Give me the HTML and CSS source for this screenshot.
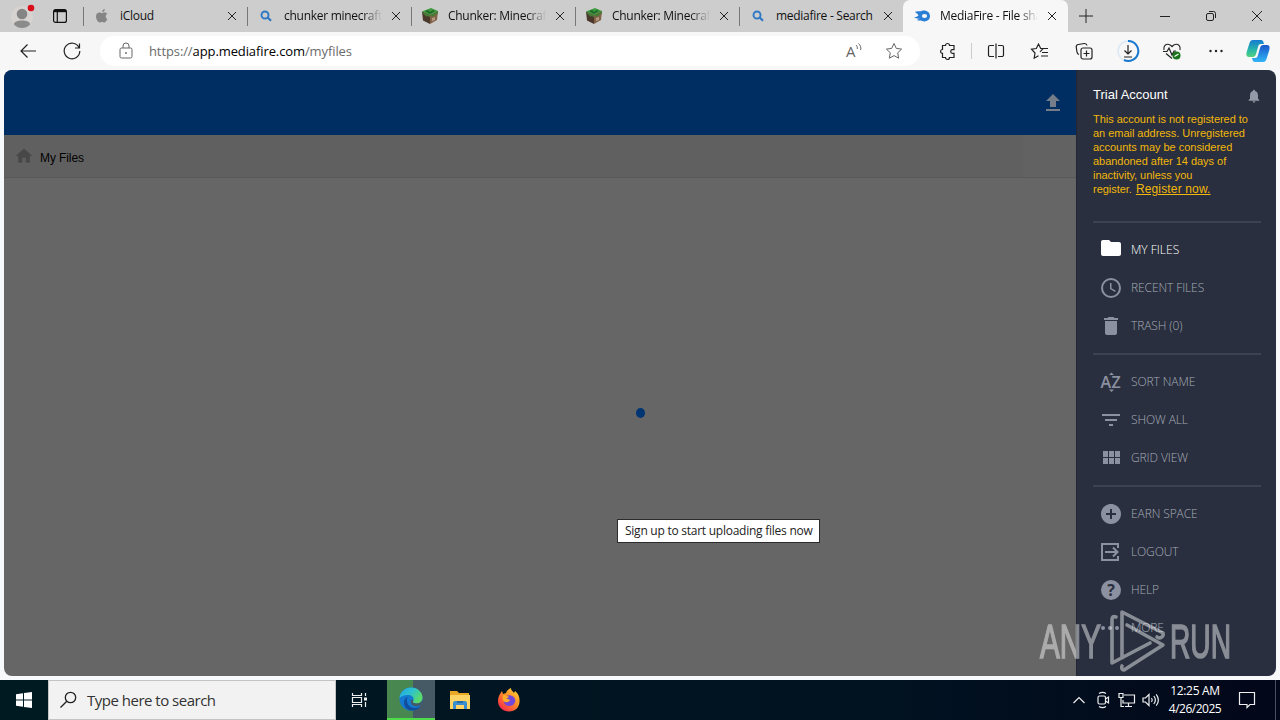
FILE: index.html
```html
<!DOCTYPE html>
<html lang="en">
<head>
  <meta charset="UTF-8" />
  <title>MediaFire - File sharing</title>
  <link rel="stylesheet" href="styles.css">
</head>
<body>
  <div class="screen">
    <!-- Tabs -->
    <div class="tab-bar">
      <div class="tab-tools">
        <svg class="profile" width="24" height="26" viewBox="0 0 24 26">
          <circle cx="11" cy="14" r="11" fill="#d6d3d1"/>
          <circle cx="11" cy="11" r="5.300" fill="#858585"/>
          <path d="M3 21.500c0-3 3.500-4 8-4s8 1 8 4c-2 2.500-5 3.500-8 3.500s-6-1-8-3.500z" fill="#8b8b8b"/>
          <circle cx="20" cy="5" r="3.300" fill="#d90c18"/>
        </svg>
        <svg width="16" height="16" viewBox="0 0 16 16" fill="none" stroke="#111" stroke-width="1.200">
          <rect x="1.600" y="1.600" width="12.800" height="12.800" rx="2"/>
          <path d="M2 3h12" stroke-width="2.400"/><path d="M5.300 4v10"/>
        </svg>
      </div>
      <div class="tab">
        <svg class="favicon" viewBox="0 0 16 16"><path d="M10.800 1c.1 1.700-1.200 3-2.700 3C8 2.500 9.200 1.200 10.800 1zM13 11.500c-.8 1.900-1.700 3-2.800 3-.8 0-1.200-.5-2.200-.5s-1.400.5-2.200.5C3.800 14.500 2 11.200 2 8.600 2 6 3.600 4.600 5.300 4.600c1 0 1.800.6 2.600.6.700 0 1.600-.7 2.900-.7 1 0 1.900.5 2.500 1.300-2.300 1.400-1.900 4.500.3 5.300z" fill="#858585"/></svg>
        <span class="tab-title">iCloud</span>
        <svg class="close" viewBox="0 0 10 10"><path d="M1 1l8 8M9 1l-8 8"/></svg>
      </div>
      <div class="tab">
        <svg class="favicon" viewBox="0 0 16 16" fill="none" stroke="#2f78c4"><circle cx="7" cy="7" r="3.500" stroke-width="1.900"/><path d="M9.700 9.400l3.300 3.400" stroke-width="2.200"/></svg>
        <span class="tab-title fade">chunker minecraft</span>
        <svg class="close" viewBox="0 0 10 10"><path d="M1 1l8 8M9 1l-8 8"/></svg>
      </div>
      <div class="tab">
        <svg class="favicon" viewBox="0 0 16 16"><path d="M0 3.500L9 0l7 3-8 4z" fill="#3d9b3d"/><path d="M0 3.500L8 7v9l-7-3.500z" fill="#49382b"/><path d="M8 7l8-4-1 9-7 4z" fill="#806247"/><path d="M3 3l3-1 2 2 3-2 2 1-5 3z" fill="#20682a"/><path d="M0 4l8 3v2L5 8v1L2 6.500zM8 7l8-4v2.500l-3 1V8l-3 .5z" fill="#467a35"/><path d="M10 10l3-1v3l-3 1z" fill="#b49a82"/></svg>
        <span class="tab-title fade">Chunker: Minecraft</span>
        <svg class="close" viewBox="0 0 10 10"><path d="M1 1l8 8M9 1l-8 8"/></svg>
      </div>
      <div class="tab">
        <svg class="favicon" viewBox="0 0 16 16"><path d="M0 3.500L9 0l7 3-8 4z" fill="#3d9b3d"/><path d="M0 3.500L8 7v9l-7-3.500z" fill="#49382b"/><path d="M8 7l8-4-1 9-7 4z" fill="#806247"/><path d="M3 3l3-1 2 2 3-2 2 1-5 3z" fill="#20682a"/><path d="M0 4l8 3v2L5 8v1L2 6.500zM8 7l8-4v2.500l-3 1V8l-3 .5z" fill="#467a35"/><path d="M10 10l3-1v3l-3 1z" fill="#b49a82"/></svg>
        <span class="tab-title fade">Chunker: Minecraft</span>
        <svg class="close" viewBox="0 0 10 10"><path d="M1 1l8 8M9 1l-8 8"/></svg>
      </div>
      <div class="tab">
        <svg class="favicon" viewBox="0 0 16 16" fill="none" stroke="#2f78c4"><circle cx="7" cy="7" r="3.500" stroke-width="1.900"/><path d="M9.700 9.400l3.300 3.400" stroke-width="2.200"/></svg>
        <span class="tab-title">mediafire - Search</span>
        <svg class="close" viewBox="0 0 10 10"><path d="M1 1l8 8M9 1l-8 8"/></svg>
      </div>
      <div class="tab active">
        <svg class="favicon" viewBox="0 0 16 16"><path d="M1 4c3-1.500 5 0 7-1.300C12 1.500 16 4 16 8s-4 6.500-8 5c-2-1-3 .2-5-1 1-1 2-.7 3-1.300C4 10.500 2 11 0 9c2 .2 4-.5 4.500-1.500C3.500 5.500 2.500 5 1 4z" fill="#2b7ed6"/><ellipse cx="10.500" cy="8" rx="2.600" ry="2" fill="#f7f7f7"/></svg>
        <span class="tab-title fade">MediaFire - File sharing</span>
        <svg class="close" viewBox="0 0 10 10"><path d="M1 1l8 8M9 1l-8 8"/></svg>
      </div>
      <svg class="new-tab" width="14" height="14" viewBox="0 0 14 14"><path d="M7 0v14M0 7h14"/></svg>
      <div class="window-controls">
        <svg viewBox="0 0 12 12"><path d="M1 6.500h10"/></svg>
        <svg viewBox="0 0 12 12"><rect x="1.500" y="3.500" width="7" height="7" rx="1.500"/><path d="M4 1.500h4.500a2 2 0 0 1 2 2V8"/></svg>
        <svg viewBox="0 0 12 12"><path d="M1 1l10 10M11 1L1 11"/></svg>
      </div>
    </div>

    <!-- Toolbar -->
    <div class="toolbar">
      <span class="tool"><svg viewBox="0 0 20 20"><path d="M18 10H3M9.500 3.500L3 10l6.500 6.500"/></svg></span>
      <span class="tool"><svg viewBox="0 0 20 20"><path d="M17 6.500A7.800 7.800 0 1 0 17.800 10M17.500 2.500v4.500H13"/></svg></span>
      <div class="address">
        <svg class="lock" viewBox="0 0 20 20"><rect x="4" y="7" width="12" height="10" rx="1.500"/><path d="M7 7V5a3 3 0 0 1 6 0v2"/><circle cx="10" cy="12" r=".6"/></svg>
        <span class="url">https://<b>app.mediafire.com</b>/myfiles</span>
        <svg class="addr-icon" viewBox="0 0 20 20"><text x="2" y="15.500" font-size="15" stroke="none" fill="#666">A</text><path d="M12 4c1.200 1 1.500 2.300 1.300 4M14.500 2.500c2 1.600 2.700 4 2.200 6.500"/></svg>
        <svg class="addr-icon" viewBox="0 0 20 20"><path d="M10 2.500l2.300 4.900 5.300.7-3.900 3.700 1 5.400-4.700-2.600-4.700 2.600 1-5.400-3.900-3.700 5.300-.7z"/></svg>
      </div>
      <span class="tool"><svg viewBox="0 0 20 20"><path d="M7.500 4.500a2 2 0 0 1 4 0H16v4.200h-1.500a1.800 1.800 0 0 0 0 3.600H16v4.200h-4.500a2 2 0 0 1-4 0H4.500v-4.200a1.900 1.900 0 0 1 0-3.800v-4z"/></svg></span>
      <i class="tool-sep"></i>
      <span class="tool"><svg viewBox="0 0 20 20"><path d="M8 4.500H4a1.500 1.500 0 0 0-1.500 1.500v8A1.500 1.500 0 0 0 4 15.500h4M12 4.500h4a1.500 1.500 0 0 1 1.500 1.500v8a1.500 1.500 0 0 1-1.500 1.500h-4M10 2.500v15"/></svg></span>
      <span class="tool"><svg viewBox="0 0 20 20"><path d="M8.500 14.700l-4.300 2.500L5 12 1.500 8.200l4.800-.7L8.500 3l2.200 4.500H18M12 11.500h6M11 15h7M10.700 7.500l2.300.3-3 3"/></svg></span>
      <span class="tool"><svg viewBox="0 0 20 20"><rect x="7" y="7" width="11" height="11" rx="2"/><path d="M12.500 9.500v6M9.500 12.500h6M5 13.500A3 3 0 0 1 3 11l-.8-5A2.500 2.500 0 0 1 4.300 3.500l6-1A2.500 2.500 0 0 1 13 4.500"/></svg></span>
      <span class="tool"><svg class="big" viewBox="0 0 24 24"><circle cx="12" cy="12" r="10" stroke="#dbe8f5" stroke-width="1.500"/><path d="M12 2a10 10 0 1 1-4 19" stroke="#1877cf" stroke-width="2"/><path d="M12 6v9M8.500 11.500L12 15l3.500-3.500M8 18h8"/></svg></span>
      <span class="tool"><svg viewBox="0 0 20 20"><path d="M2 9C1 5 4 2.500 7 3.500c1.500.4 2.300 1.200 3 2 .7-.8 1.500-1.600 3-2 3-1 6 1.500 5 5.500M1 10.500h4l2-3.500 3 7 2-4h2M4 12.500l6 5"/><circle cx="14.500" cy="14.500" r="4" fill="#19731d" stroke="none"/><path d="M12.500 15.500l4-2.500" stroke="#fff"/></svg></span>
      <span class="tool"><svg viewBox="0 0 20 20" class="dots"><circle cx="4.500" cy="10" r="1.200"/><circle cx="10" cy="10" r="1.200"/><circle cx="15.500" cy="10" r="1.200"/></svg></span>
      <span class="tool copilot"><svg class="big" viewBox="0 0 24 24">
        <defs>
          <linearGradient id="cpA" x1="0" y1="0" x2="0" y2="1"><stop offset="0" stop-color="#147bd1"/><stop offset=".6" stop-color="#28b8a8"/><stop offset="1" stop-color="#53d27c"/></linearGradient>
          <linearGradient id="cpB" x1="0" y1="0" x2="0" y2="1"><stop offset="0" stop-color="#1957c8"/><stop offset="1" stop-color="#31b6f6"/></linearGradient>
        </defs>
        <path d="M7 1h8c2 0 2.500 2 3 4h-3c-2 0-2.500 1-3 3l-2 7c-.5 2-1.500 3-3.500 3H3c-3 0-3-3-2-6l2.500-8C4.200 2 5 1 7 1z" fill="url(#cpA)" stroke="none"/>
        <path d="M17 23H9c-2 0-2.500-2-3-4h3c2 0 2.500-1 3-3l2-7c.5-2 1.500-3 3.500-3H21c3 0 3 3 2 6l-2.500 8c-.7 2-1.500 3-3.500 3z" fill="url(#cpB)" stroke="none"/>
      </svg></span>
    </div>

    <!-- Page -->
    <div class="page">
      <div class="files">
        <div class="files-header">
          <svg width="24" height="24" viewBox="0 0 24 24"><path d="M9 16h6v-6h4l-7-7-7 7h4zm-4 2h14v2H5z" fill="#747d88"/></svg>
        </div>
        <div class="crumbs">
          <svg width="20" height="20" viewBox="0 0 24 24"><path d="M10 20v-6h4v6h5v-8h3L12 3 2 12h3v8z" fill="#484848"/></svg>
          <span>My Files</span>
          <i class="crumb-action"></i>
        </div>
        <div class="files-body"><i class="loader"></i></div>
      </div>

      <div class="sidebar">
        <div class="account">
          <div class="account-row">
            <span class="account-name">Trial Account</span>
            <svg width="16" height="16" viewBox="0 0 24 24"><path d="M12 22c1.100 0 2-.9 2-2h-4c0 1.100.9 2 2 2zm6-6v-5c0-3.070-1.640-5.640-4.500-6.320V4c0-.83-.67-1.500-1.500-1.500s-1.500.67-1.500 1.500v.68C7.630 5.360 6 7.920 6 11v5l-2 2v1h16v-1l-2-2z" fill="#959aa8"/></svg>
          </div>
          <p class="notice">This account is not registered to<br>an email address. Unregistered<br>accounts may be considered<br>abandoned after 14 days of<br>inactivity, unless you<br>register. <a>Register now.</a></p>
        </div>
        <div class="menu">
          <div class="menu-item selected">
            <svg viewBox="0 0 24 24"><path d="M10 4H4c-1.100 0-2 .9-2 2v12c0 1.100.9 2 2 2h16c1.100 0 2-.9 2-2V8c0-1.100-.9-2-2-2h-8l-2-2z"/></svg>
            <span>MY FILES</span>
          </div>
          <div class="menu-item">
            <svg viewBox="0 0 24 24"><circle cx="12" cy="12" r="9" fill="none" stroke="#8c91a1" stroke-width="2"/><path d="M12.500 7H11v6l5 3 .8-1.300-4.300-2.500z"/></svg>
            <span>RECENT FILES</span>
          </div>
          <div class="menu-item">
            <svg viewBox="0 0 24 24"><path d="M6 19c0 1.100.9 2 2 2h8c1.100 0 2-.9 2-2V7H6v12zM19 4h-3.500l-1-1h-5l-1 1H5v2h14V4z"/></svg>
            <span>TRASH (0)</span>
          </div>
        </div>
        <div class="menu">
          <div class="menu-item">
            <svg viewBox="0 0 24 24" class="az"><text x="1.500" y="18">A</text><text x="12.500" y="18">Z</text><path d="M10 5l2.500-2.500L15 5zM10 19.500h5L12.500 22z"/></svg>
            <span>SORT NAME</span>
          </div>
          <div class="menu-item">
            <svg viewBox="0 0 24 24"><path d="M10 18h4v-2h-4v2zM3 6v2h18V6H3zm3 7h12v-2H6v2z"/></svg>
            <span>SHOW ALL</span>
          </div>
          <div class="menu-item">
            <svg viewBox="0 0 24 24"><path d="M4 11h5V5H4v6zm0 7h5v-6H4v6zm6 0h5v-6h-5v6zm6 0h5v-6h-5v6zm-6-7h5V5h-5v6zm6-6v6h5V5h-5z"/></svg>
            <span>GRID VIEW</span>
          </div>
        </div>
        <div class="menu">
          <div class="menu-item">
            <svg viewBox="0 0 24 24"><path d="M12 2C6.480 2 2 6.480 2 12s4.480 10 10 10 10-4.480 10-10S17.520 2 12 2zm5 11h-4v4h-2v-4H7v-2h4V7h2v4h4v2z"/></svg>
            <span>EARN SPACE</span>
          </div>
          <div class="menu-item">
            <svg viewBox="0 0 24 24"><path d="M19 8V4H3v16h16v-4" fill="none" stroke="#8c91a1" stroke-width="2"/><path d="M6 12h12M14 7.500l4.500 4.500-4.500 4.500" fill="none" stroke="#8c91a1" stroke-width="2"/></svg>
            <span>LOGOUT</span>
          </div>
          <div class="menu-item">
            <svg viewBox="0 0 24 24"><circle cx="12" cy="12" r="10"/><text class="question" x="12" y="18" text-anchor="middle">?</text></svg>
            <span>HELP</span>
          </div>
          <div class="menu-item">
            <svg viewBox="0 0 24 24"><circle cx="4" cy="12" r="2"/><circle cx="11" cy="12" r="2"/><circle cx="18" cy="12" r="2"/></svg>
            <span>MORE</span>
          </div>
        </div>
      </div>
    </div>

    <!-- Taskbar -->
    <div class="taskbar">
      <span class="start"><svg width="16" height="16" viewBox="0 0 16 16" fill="#fff"><path d="M0 2.200l7-1v6.300H0zM8 1.100L16 0v7.500H8zM0 8.500h7v6.300l-7-1zM8 8.500h8V16l-8-1.100z"/></svg></span>
      <div class="search">
        <svg width="18" height="18" viewBox="0 0 18 18" fill="none" stroke="#222" stroke-width="1.300"><circle cx="10.500" cy="6.500" r="5.200"/><path d="M6.800 10.200L.5 16.500"/></svg>
        <span>Type here to search</span>
      </div>
      <span class="task"><svg width="18" height="16" viewBox="0 0 18 16" fill="none" stroke="#eee" stroke-width="1.200"><path d="M1.500 1v2.500h9V1M1.500 15v-2.500h9V15M1.500 5.500h9v5h-9zM14.500 1v3M14.500 10v5"/><path d="M13 5.500h3v3h-3z" fill="#eee" stroke="none"/></svg></span>
      <span class="task edge"><svg width="24" height="24" viewBox="0 0 24 24">
        <defs>
          <linearGradient id="edA" x1="0" y1="0" x2="1" y2=".5"><stop offset="0" stop-color="#21a6e8"/><stop offset=".55" stop-color="#2fc3ca"/><stop offset="1" stop-color="#5bdb67"/></linearGradient>
        </defs>
        <circle cx="12" cy="12" r="11.500" fill="#1479cf"/>
        <path d="M.5 11C1 5 6 .5 12 .5c7 0 11.500 5 11.500 10 0 4-3 6-6 6-2.500 0-4-1-3.500-2 1.500-2 .5-6-4-6.500C6 7.500 2 9 .5 11z" fill="url(#edA)"/>
        <path d="M8.500 10c-2 5 1 11 7.500 11 2.500 0 4.500-1 6-2-2 3-6 5-10 4.500C6 22.500 4 17 5.500 13c.6-1.500 1.700-2.500 3-3z" fill="#124e9e"/>
        <path d="M14 14.500c-.5 1 1 2 3.500 2 2.500 0 4.500-1 5.500-3 .2 2-.3 3.500-1 4.500-4 2-9 1.500-10-2-.5-2 .5-4 2-3.500z" fill="#465a66"/>
      </svg></span>
      <span class="task"><svg width="24" height="24" viewBox="0 0 24 24"><path d="M2 3h7l2 2h10v16H2z" fill="#e9a826"/><path d="M2 7h20v14H2z" fill="#ffd464"/><path d="M5 21v-6c0-1 .7-2 2-2h10c1.300 0 2 1 2 2v6h-3v-4H8v4z" fill="#3a8ed0"/><path d="M9 13h6v2H9z" fill="#226aa8"/></svg></span>
      <span class="task"><svg width="24" height="24" viewBox="0 0 24 24">
        <defs><linearGradient id="ff" x1="1" y1="0" x2=".2" y2="1"><stop offset="0" stop-color="#ffe03b"/><stop offset=".5" stop-color="#ff8a26"/><stop offset="1" stop-color="#f5264f"/></linearGradient></defs>
        <path d="M3 6l2-3 1 3 3-1c1-3 3-4 5-5 0 3 2 3 3 5l1-2c3 2 5 6 4.500 11C22 20 18 23.500 12 23.500S1 19 1 13c0-3 .8-5 2-7z" fill="url(#ff)"/>
        <path d="M8 9c2-2 7-3 9.500 1 2 3 0 8-5 8-4 0-6-3-5.500-6 1.500 1 3 1 4 0C9 11 8 10.500 8 9z" fill="#7447d8"/>
        <path d="M6 7c2 0 4 .5 6 2-1 .8-2 1-3 1 1 1 3 1 4 2-1 2-3 2.500-5 2-2-.7-3-3-2-7z" fill="#ffac28"/>
      </svg></span>
      <div class="tray">
        <svg width="24" height="20" viewBox="0 0 24 20"><path d="M6.500 13l5.500-5.500 5.500 5.500"/></svg>
        <svg width="24" height="20" viewBox="0 0 24 20"><rect x="7" y="6" width="7.500" height="8" rx="1.500"/><path d="M14.500 9l3-2v6l-3-2M8 3.500c2-1.300 5-1.300 7 0M8 16.500c2 1.300 5 1.300 7 0"/></svg>
        <svg width="24" height="20" viewBox="0 0 24 20"><path d="M9 5h10.500v8H8V10M13.500 13v3.500M10 16.500h7M4 3.500h4v4H4zM6 7.500v9h3"/></svg>
        <svg width="24" height="20" viewBox="0 0 24 20"><path d="M4 8h2.500L10 4.500v11L6.500 12H4zM12.500 8c1 1.300 1 2.700 0 4M14.800 6c2 2.500 2 5.500 0 8M17.200 4.300c2.700 3.500 2.700 7.900 0 11.400"/></svg>
        <div class="clock"><span>12:25 AM</span><span class="date">4/26/2025</span></div>
        <svg class="action" width="18" height="18" viewBox="0 0 18 18"><path d="M1.500 1.500h15v12h-4.500l-3 3v-3H1.500z"/></svg>
        <i class="show-desktop"></i>
      </div>
    </div>

    <div class="tooltip"><span>Sign up to start uploading files now</span></div>

    <svg class="watermark" width="200" height="70" viewBox="0 0 200 70">
      <text x="4" y="52" textLength="61" lengthAdjust="spacingAndGlyphs">ANY</text>
      <text x="134" y="52" textLength="61" lengthAdjust="spacingAndGlyphs">RUN</text>
      <path class="play" d="M80 11c-3-1-4 0-4 3v43l38-20M86 52V6l41 21c1 4-3 6-6 4M91 19l36 20-39 25c-2 0-3-2-2-4"/>
    </svg>
  </div>
</body>
</html>
```
FILE: styles.css
```css
* {
  box-sizing: border-box;
}
body {
  margin: 0;
  font-family: "Open Sans", "Noto Sans", sans-serif;
  font-size: 12px;
  color: #111;
}
svg {
  display: block;
  flex: none;
}
.screen {
  position: relative;
  width: 1280px;
  height: 720px;
  overflow: hidden;
  display: flex;
  flex-direction: column;
  background: #f7f9fb;
}

/* tabs */
.tab-bar {
  height: 32px;
  display: flex;
  align-items: center;
  background: #cdcdcd;
}
.tab-tools {
  width: 83px;
  display: flex;
  align-items: center;
  gap: 17px;
  padding-left: 11px;
}
.tab {
  width: 164px;
  height: 32px;
  display: flex;
  align-items: center;
  padding: 0 10px;
  background: linear-gradient(#777, #777) 0 7px / 1px 19px no-repeat;
}
.tab.active {
  background: #f7f7f7;
  border-radius: 7px 7px 0 0;
  width: 165px;
}
.favicon {
  width: 16px;
  height: 16px;
  margin-left: 1px;
}
.tab-title {
  width: 98px;
  margin-left: 10px;
  margin-right: 9px;
  overflow: hidden;
  white-space: nowrap;
  line-height: 18px;
  letter-spacing: -0.28px;
}
.fade {
  -webkit-mask-image: linear-gradient(90deg, #000 80%, transparent 100%);
  mask-image: linear-gradient(90deg, #000 80%, transparent 100%);
}
.close {
  width: 10px;
  height: 10px;
  stroke: #222;
  fill: none;
}
.new-tab {
  margin-left: 11px;
  stroke: #222;
}
.window-controls {
  display: flex;
  gap: 34px;
  margin-left: auto;
  padding-right: 17px;
}
.window-controls svg {
  width: 12px;
  height: 12px;
  fill: none;
  stroke: #222;
}

/* toolbar */
.toolbar {
  height: 38px;
  display: flex;
  align-items: center;
  padding-left: 6px;
  background: #f7f7f7;
}
.tool {
  width: 44px;
  flex: none;
  display: flex;
  justify-content: center;
}
.tool svg {
  width: 20px;
  height: 20px;
  fill: none;
  stroke: #222;
  stroke-width: 1.2;
}
.tool svg.big {
  width: 24px;
  height: 24px;
}
.tool svg.dots {
  fill: #222;
  stroke: none;
}
.tool.copilot {
  width: 40px;
}
.tool-sep {
  width: 1px;
  height: 16px;
  margin: 0 2px 0 1px;
  background: #ccc;
}
.address {
  width: 820px;
  height: 30px;
  flex: none;
  display: flex;
  align-items: center;
  margin: 0 6px;
  padding-left: 16px;
  padding-right: 16px;
  border-radius: 15px;
  background: #fff;
}
.address svg {
  width: 20px;
  height: 20px;
  fill: none;
  stroke: #666;
}
.url {
  flex: 1;
  margin-left: 13px;
  font-size: 13px;
  letter-spacing: -0.1px;
  color: #6b6b6b;
}
.url b {
  font-weight: 400;
  color: #000;
}
.addr-icon + .addr-icon {
  margin-left: 20px;
}

/* page */
.page {
  height: 606px;
  margin: 0 4px 4px;
  display: flex;
  border-radius: 8px;
  overflow: hidden;
}
.files {
  flex: 1;
  display: flex;
  flex-direction: column;
  background: #666;
}
.files-header {
  height: 65px;
  display: flex;
  align-items: center;
  justify-content: flex-end;
  padding-right: 11px;
  background: #002e62;
}
.crumbs {
  height: 43px;
  display: flex;
  align-items: center;
  padding-left: 10px;
  background: #606060;
  border-bottom: 1px solid #595959;
  font: 12px "Liberation Sans", sans-serif;
  letter-spacing: -0.1px;
  color: #000;
}
.crumbs span {
  margin-left: 6px;
  padding-top: 3px;
}
.crumb-action {
  width: 53px;
  height: 42px;
  margin-left: auto;
  background: #626262;
}
.files-body {
  flex: 1;
  padding: 230px 0 0 632px;
}
.loader {
  display: block;
  width: 9px;
  height: 10px;
  border-radius: 50%;
  background: #003574;
}

/* sidebar */
.sidebar {
  width: 200px;
  padding: 16px 15px 0 17px;
  background: #292f3e;
  box-shadow: inset 1px 0 #232734;
}
.account {
  height: 135px;
  font-family: "Liberation Sans", sans-serif;
}
.account-row {
  display: flex;
  justify-content: space-between;
  align-items: center;
  height: 17px;
  margin-right: -1px;
}
.account-row svg {
  margin-top: 3px;
}
.account-name {
  font-size: 13px;
  color: #fff;
}
.notice {
  margin: 9px 0 0;
  font-size: 11px;
  line-height: 14px;
  letter-spacing: -0.03px;
  white-space: nowrap;
  color: #f2b70a;
}
.notice a {
  margin-left: 1px;
  font-size: 12px;
  letter-spacing: 0.15px;
  text-decoration: underline;
}
.menu {
  padding: 8px 0;
  border-top: 2px solid #3c4252;
}
.menu-item {
  height: 38px;
  display: flex;
  align-items: center;
  gap: 8px;
  padding-left: 6px;
  font-weight: 300;
  letter-spacing: -0.1px;
  color: #a6abb8;
}
.menu-item svg {
  width: 24px;
  height: 24px;
  fill: #8c91a1;
}
.menu-item span {
  margin-top: -1px;
  white-space: nowrap;
}
.menu-item.selected {
  color: #fff;
  letter-spacing: 0;
}
.menu-item.selected svg {
  margin-top: -4px;
  fill: #fff;
}
.menu-item .az text {
  font: 600 16px "Open Sans", sans-serif;
}
.menu-item .question {
  font: 700 16px "Open Sans", sans-serif;
  fill: #292f3e;
}

/* taskbar */
.taskbar {
  height: 40px;
  display: flex;
  align-items: center;
  background: linear-gradient(90deg, #001a22, #011221 70%, #020719);
}
.start {
  width: 48px;
  display: flex;
  justify-content: center;
}
.search {
  width: 288px;
  height: 40px;
  display: flex;
  align-items: center;
  gap: 9px;
  padding-left: 11px;
  background: #f2f2f2;
  border: 1px solid #c5c5c5;
  font-size: 15px;
  letter-spacing: -0.5px;
  color: #333;
}
.task {
  width: 48px;
  height: 40px;
  margin-right: 1px;
  display: flex;
  align-items: center;
  justify-content: center;
}
.edge {
  margin-left: 2px;
  background: linear-gradient(90deg, #488750 54%, #465a66 54%);
  border-bottom: 2px solid #4fdc4a;
}
.tray {
  margin-left: auto;
  display: flex;
  align-items: center;
  color: #fff;
}
.tray svg {
  fill: none;
  stroke: #eee;
  stroke-width: 1.2;
}
.clock {
  width: 64px;
  display: flex;
  flex-direction: column;
  align-items: center;
  line-height: 18px;
  letter-spacing: -0.3px;
}
.date {
  letter-spacing: -0.5px;
}
.action {
  margin-left: 11px;
}
.show-desktop {
  width: 5px;
  height: 40px;
  margin-left: 19px;
  border-left: 1px solid #4a5060;
}

/* overlays */
.tooltip {
  position: absolute;
  left: 617px;
  top: 519px;
  width: 203px;
  height: 24px;
  padding-left: 7px;
  line-height: 22px;
  letter-spacing: -0.25px;
  white-space: nowrap;
  background: #fff;
  border: 1px solid #2b2b2b;
  color: #222;
}
.watermark {
  position: absolute;
  left: 1036px;
  top: 606px;
  fill: #fff;
  stroke: #fff;
  opacity: .45;
}
.watermark text {
  font: 49px "Liberation Sans", sans-serif;
  stroke-width: 1.6;
}
.play {
  fill: none;
  stroke-width: 3.6;
  stroke-linejoin: round;
  stroke-linecap: round;
}
```
